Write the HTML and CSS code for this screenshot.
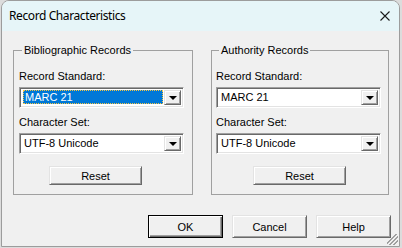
FILE: index.html
```html
<!DOCTYPE html>
<html lang="en">
<head>
  <meta charset="UTF-8">
  <title>Record Characteristics</title>
  <link rel="stylesheet" href="styles.css">
</head>
<body>
  <div class="window">
    <!-- title bar -->
    <div class="titlebar">
      <span class="title">Record Characteristics</span>
      <svg class="close" width="10" height="10" viewBox="0 0 10 10">
        <path d="M0.5 0.5 L9.5 9.5 M9.5 0.5 L0.5 9.5" stroke="#1a1a1a" stroke-width="1.1" fill="none"/>
      </svg>
    </div>

    <div class="content">
      <div class="groups">
        <fieldset class="group group-bib">
          <legend>Bibliographic Records</legend>
          <div class="field-label">Record Standard:</div>
          <div class="combo">
            <span class="combo-value selected"><span class="focus">MARC 21</span></span>
            <span class="combo-btn"><span class="arrow"></span></span>
          </div>
          <div class="field-label second">Character Set:</div>
          <div class="combo">
            <span class="combo-value">UTF-8 Unicode</span>
            <span class="combo-btn"><span class="arrow"></span></span>
          </div>
          <button class="btn reset">Reset</button>
        </fieldset>

        <fieldset class="group group-auth">
          <legend>Authority Records</legend>
          <div class="field-label">Record Standard:</div>
          <div class="combo">
            <span class="combo-value">MARC 21</span>
            <span class="combo-btn"><span class="arrow"></span></span>
          </div>
          <div class="field-label second">Character Set:</div>
          <div class="combo">
            <span class="combo-value">UTF-8 Unicode</span>
            <span class="combo-btn"><span class="arrow"></span></span>
          </div>
          <button class="btn reset">Reset</button>
        </fieldset>
      </div>

      <div class="actions">
        <button class="btn default">OK</button>
        <button class="btn">Cancel</button>
        <button class="btn">Help</button>
      </div>
    </div>

    <span class="grip"></span>
  </div>
</body>
</html>
```

FILE: styles.css
```css
* {
  margin: 0;
  padding: 0;
  box-sizing: border-box;
}
html {
  background: #dcdcdc;
}
body {
  margin: 0;
  font-family: "Liberation Sans", Arial, sans-serif;
  font-size: 11px;
  color: #000;
}

/* window frame */
.window {
  position: relative;
  margin-left: 1px;
  width: 399px;
  height: 247px;
  background: #f0f0f0;
  border: 1px solid #9c9c9c;
  border-radius: 8px 8px 0 0;
  overflow: hidden;
}

.titlebar {
  height: 30px;
  background: #e6f5f8;
  display: flex;
  align-items: center;
  justify-content: space-between;
  padding: 0 9px 1px 7px;
}
.title {
  font-family: "Noto Sans", "Open Sans", sans-serif;
  font-size: 12px;
  letter-spacing: -0.4px;
  color: #000;
}
.close {
  display: block;
}

.content {
  padding: 13px 0 0 11px;
}

.groups {
  display: flex;
  gap: 18px;
}

/* group boxes */
.group {
  border: 1px solid #a0a0a0;
  padding: 0 5px 9px 5px;
  min-width: 0;
}
.group-bib {
  width: 180px;
}
.group-auth {
  width: 178px;
  padding-left: 4px;
}
.group legend {
  line-height: 13px;
  padding: 0 2px;
  margin-left: 3px;
}

.field-label {
  line-height: 13px;
  margin-top: 13px;
}
.field-label.second {
  margin-top: 8px;
}

/* combo boxes */
.combo {
  width: 165px;
  height: 21px;
  margin-top: 4px;
  display: flex;
  background: #fff;
  border: 1px solid;
  border-color: #a0a0a0 #fff #fff #a0a0a0;
  box-shadow: inset 1px 1px 0 #696969, inset -1px -1px 0 #e3e3e3;
  padding: 2px;
}
.combo-value {
  flex: 1;
  display: flex;
  align-items: center;
  padding-left: 2px;
  line-height: 15px;
}
.combo-value.selected {
  background: #0078d7;
  color: #fff;
  margin: 0 1px 1px 1px;
  padding: 0;
}
.combo-value .focus {
  display: block;
  width: 100%;
  height: 100%;
  padding-left: 1px;
  border: 1px dotted #f5c542;
  line-height: 13px;
}
.combo-btn {
  width: 17px;
  height: 15px;
  background: #f0f0f0;
  border: 1px solid;
  border-color: #e3e3e3 #696969 #696969 #e3e3e3;
  box-shadow: inset 1px 1px 0 #fff, inset -1px -1px 0 #a0a0a0;
  display: flex;
  align-items: center;
  justify-content: center;
}
.arrow {
  width: 0;
  height: 0;
  border-left: 4px solid transparent;
  border-right: 4px solid transparent;
  border-top: 4px solid #000;
  margin-top: 1px;
}

/* buttons */
.btn {
  font-family: "Liberation Sans", Arial, sans-serif;
  font-size: 11px;
  color: #000;
  width: 75px;
  height: 23px;
  background: #f0f0f0;
  border: 1px solid;
  border-color: #e3e3e3 #696969 #696969 #e3e3e3;
  box-shadow: inset 1px 1px 0 #fff, inset -1px -1px 0 #a0a0a0;
  display: block;
}
.btn.reset {
  width: 93px;
  height: 19px;
  margin-top: 12px;
}
.group-bib .btn.reset {
  margin-left: 30px;
}
.group-auth .btn.reset {
  margin-left: 37px;
}
.btn.default {
  border: 1px solid #000;
  box-shadow: inset 1px 1px 0 #fff, inset -1px -1px 0 #696969, inset -2px -2px 0 #a0a0a0;
}

.actions {
  display: flex;
  justify-content: flex-end;
  gap: 9px;
  margin-top: 20px;
  padding-right: 8px;
}

/* size grip */
.grip {
  position: absolute;
  right: 1px;
  bottom: 1px;
  width: 11px;
  height: 11px;
  background: linear-gradient(135deg,
    transparent 0 40%, #a0a0a0 40% 46%, transparent 46% 58%,
    #a0a0a0 58% 64%, transparent 64% 76%, #a0a0a0 76% 82%, transparent 82%);
}
```
